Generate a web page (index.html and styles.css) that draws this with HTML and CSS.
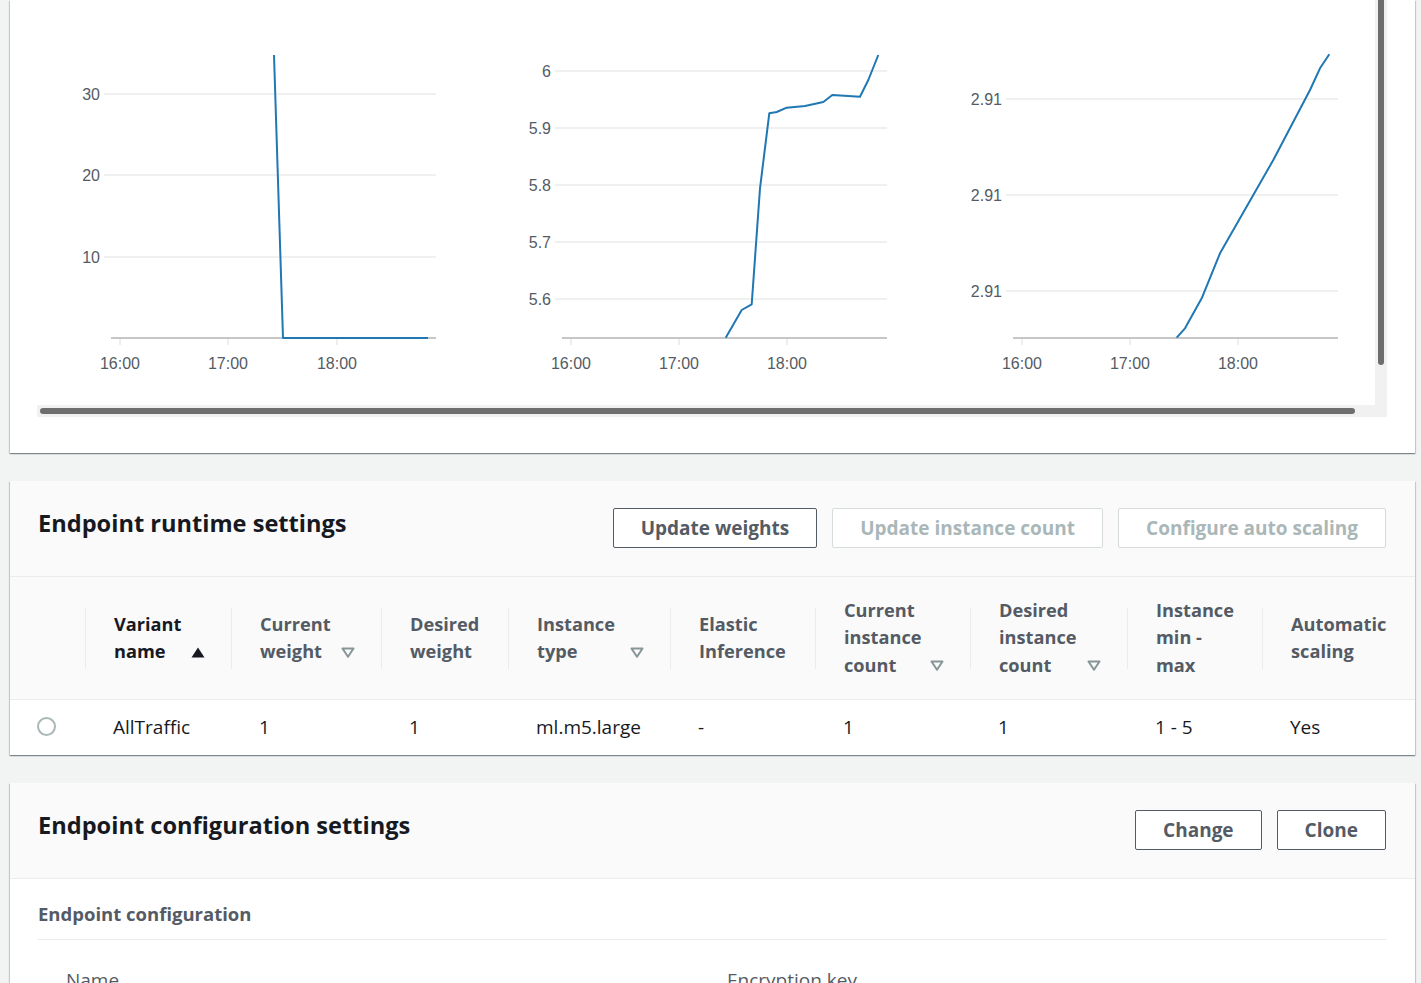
FILE: index.html
```html
<!DOCTYPE html>
<html lang="en">
<head>
<meta charset="utf-8">
<title>Endpoint</title>
<link rel="stylesheet" href="styles.css">
</head>
<body>
<div class="page">

  <section class="card card-charts">
    <div class="scroller">
      <div class="scroll-row">
        <div class="viewport">
          <div class="charts">
            <svg class="chart" width="451" height="405" viewBox="0 0 451 405">
              <g class="grid">
                <line x1="67" y1="94" x2="399" y2="94"/>
                <line x1="67" y1="175" x2="399" y2="175"/>
                <line x1="67" y1="257" x2="399" y2="257"/>
              </g>
              <line class="axis" x1="74" y1="338" x2="399" y2="338"/>
              <g class="ticks">
                <line x1="83" y1="339" x2="83" y2="345"/>
                <line x1="191" y1="339" x2="191" y2="345"/>
                <line x1="300" y1="339" x2="300" y2="345"/>
              </g>
              <g class="ylab">
                <text x="63" y="100">30</text>
                <text x="63" y="181">20</text>
                <text x="63" y="263">10</text>
              </g>
              <g class="xlab">
                <text x="83" y="369">16:00</text>
                <text x="191" y="369">17:00</text>
                <text x="300" y="369">18:00</text>
              </g>
              <polyline class="series" points="237,55 246,338 391,338"/>
            </svg>
            <svg class="chart" width="451" height="405" viewBox="0 0 451 405">
              <g class="grid">
                <line x1="67" y1="71" x2="399" y2="71"/>
                <line x1="67" y1="128" x2="399" y2="128"/>
                <line x1="67" y1="185" x2="399" y2="185"/>
                <line x1="67" y1="242" x2="399" y2="242"/>
                <line x1="67" y1="299" x2="399" y2="299"/>
              </g>
              <line class="axis" x1="74" y1="338" x2="399" y2="338"/>
              <g class="ticks">
                <line x1="83" y1="339" x2="83" y2="345"/>
                <line x1="191" y1="339" x2="191" y2="345"/>
                <line x1="299" y1="339" x2="299" y2="345"/>
              </g>
              <g class="ylab">
                <text x="63" y="77">6</text>
                <text x="63" y="134">5.9</text>
                <text x="63" y="191">5.8</text>
                <text x="63" y="248">5.7</text>
                <text x="63" y="305">5.6</text>
              </g>
              <g class="xlab">
                <text x="83" y="369">16:00</text>
                <text x="191" y="369">17:00</text>
                <text x="299" y="369">18:00</text>
              </g>
              <polyline class="series" points="237.7,337.7 253.7,310 263.7,304.3 272,188.3 281.3,113.3 288.7,112 298.7,107.7 317,106 335.3,102 344.3,95 372,96.7 380.3,80 390.3,55"/>
            </svg>
            <svg class="chart" width="451" height="405" viewBox="0 0 451 405">
              <g class="grid">
                <line x1="67" y1="99" x2="399" y2="99"/>
                <line x1="67" y1="195" x2="399" y2="195"/>
                <line x1="67" y1="291" x2="399" y2="291"/>
              </g>
              <line class="axis" x1="74" y1="338" x2="399" y2="338"/>
              <g class="ticks">
                <line x1="83" y1="339" x2="83" y2="345"/>
                <line x1="191" y1="339" x2="191" y2="345"/>
                <line x1="299" y1="339" x2="299" y2="345"/>
              </g>
              <g class="ylab">
                <text x="63" y="105">2.91</text>
                <text x="63" y="201">2.91</text>
                <text x="63" y="297">2.91</text>
              </g>
              <g class="xlab">
                <text x="83" y="369">16:00</text>
                <text x="191" y="369">17:00</text>
                <text x="299" y="369">18:00</text>
              </g>
              <polyline class="series" points="237.7,337.7 246,328.3 262.7,298.3 281,253.3 334.3,160 371,90 381,68.3 390.3,54.3"/>
            </svg>
          </div>
        </div>
        <div class="vtrack"><div class="vthumb"></div></div>
      </div>
      <div class="htrack"><div class="hthumb"></div></div>
    </div>
  </section>

  <section class="card">
    <header class="card-header">
      <h2 class="card-title">Endpoint runtime settings</h2>
      <div class="actions">
        <button class="btn">Update weights</button>
        <button class="btn btn-disabled">Update instance count</button>
        <button class="btn btn-disabled">Configure auto scaling</button>
      </div>
    </header>
    <table class="table">
      <colgroup>
        <col style="width:75px"><col style="width:146px"><col style="width:150px"><col style="width:127px"><col style="width:162px"><col style="width:145px"><col style="width:155px"><col style="width:157px"><col style="width:135px"><col style="width:153px">
      </colgroup>
      <thead>
        <tr>
          <th class="th-select"></th>
          <th><div class="th-inner"><div class="th-content"><span class="th-text sorted">Variant<br>name</span><svg class="sort" width="14" height="11" viewBox="0 0 14 11"><polygon points="7,0.5 13.5,10.5 0.5,10.5" fill="#16191f"/></svg></div></div></th>
          <th><div class="th-inner"><div class="th-content"><span class="th-text">Current<br>weight</span><svg class="sort" width="14" height="11" viewBox="0 0 14 11"><polygon points="1.5,1.5 12.5,1.5 7,9.8" fill="none" stroke="#879596" stroke-width="2" stroke-linejoin="round"/></svg></div></div></th>
          <th><div class="th-inner"><div class="th-content"><span class="th-text">Desired<br>weight</span></div></div></th>
          <th><div class="th-inner"><div class="th-content"><span class="th-text">Instance<br>type</span><svg class="sort" width="14" height="11" viewBox="0 0 14 11"><polygon points="1.5,1.5 12.5,1.5 7,9.8" fill="none" stroke="#879596" stroke-width="2" stroke-linejoin="round"/></svg></div></div></th>
          <th><div class="th-inner"><div class="th-content"><span class="th-text">Elastic<br>Inference</span></div></div></th>
          <th><div class="th-inner"><div class="th-content"><span class="th-text">Current<br>instance<br>count</span><svg class="sort" width="14" height="11" viewBox="0 0 14 11"><polygon points="1.5,1.5 12.5,1.5 7,9.8" fill="none" stroke="#879596" stroke-width="2" stroke-linejoin="round"/></svg></div></div></th>
          <th><div class="th-inner"><div class="th-content"><span class="th-text">Desired<br>instance<br>count</span><svg class="sort" width="14" height="11" viewBox="0 0 14 11"><polygon points="1.5,1.5 12.5,1.5 7,9.8" fill="none" stroke="#879596" stroke-width="2" stroke-linejoin="round"/></svg></div></div></th>
          <th><div class="th-inner"><div class="th-content"><span class="th-text">Instance<br>min -<br>max</span></div></div></th>
          <th><div class="th-inner"><div class="th-content"><span class="th-text">Automatic<br>scaling</span></div></div></th>
        </tr>
      </thead>
      <tbody>
        <tr>
          <td class="td-select"><span class="radio"></span></td>
          <td>AllTraffic</td>
          <td>1</td>
          <td>1</td>
          <td>ml.m5.large</td>
          <td>-</td>
          <td>1</td>
          <td>1</td>
          <td>1 - 5</td>
          <td>Yes</td>
        </tr>
      </tbody>
    </table>
  </section>

  <section class="card">
    <header class="card-header">
      <h2 class="card-title">Endpoint configuration settings</h2>
      <div class="actions">
        <button class="btn">Change</button>
        <button class="btn">Clone</button>
      </div>
    </header>
    <div class="card-body">
      <h3 class="sub-title">Endpoint configuration</h3>
      <div class="kv">
        <div class="kv-col"><div class="kv-label">Name</div></div>
        <div class="kv-col"><div class="kv-label">Encryption key</div></div>
      </div>
    </div>
  </section>

</div>
</body>
</html>
```

FILE: styles.css
```css
html, body {
  margin: 0;
  padding: 0;
  height: 983px;
  overflow: hidden;
}
body {
  background: #f2f3f3;
  font-family: "Open Sans", "Noto Sans", sans-serif;
  color: #16191f;
}
.page {
  padding-left: 10px;
  width: 1405px;
}
.card {
  background: #ffffff;
  box-shadow: 0 1px 1px 0 rgba(0, 28, 36, 0.3), 1px 1px 1px 0 rgba(0, 28, 36, 0.15), -1px 1px 1px 0 rgba(0, 28, 36, 0.15);
  margin-top: 28px;
}
.card-charts {
  margin-top: 0;
  padding: 0 28px 36px 27px;
}

/* chart scroller */
.scroller {
  width: 1350px;
  display: flex;
  flex-direction: column;
}
.scroll-row {
  display: flex;
  height: 405px;
}
.viewport {
  width: 1338px;
  height: 405px;
  overflow: hidden;
  background: #fff;
}
.charts {
  display: flex;
  width: 1361px;
}
.chart {
  flex: none;
  display: block;
}
.vtrack {
  width: 12px;
  background: #f1f1f1;
}
.vthumb {
  margin-left: 3px;
  width: 6px;
  height: 365px;
  border-radius: 0 0 3px 3px;
  background: #6e6e6e;
}
.htrack {
  height: 12px;
  background: #f1f1f1;
  display: flex;
  align-items: center;
}
.hthumb {
  margin-left: 3px;
  width: 1315px;
  height: 6px;
  border-radius: 3px;
  background: #6e6e6e;
}
.grid line {
  stroke: #eaeded;
  stroke-width: 1.5;
}
.axis {
  stroke: #c6c6c6;
  stroke-width: 2;
}
.ticks line {
  stroke: #dcdcdc;
  stroke-width: 1;
}
.ylab text, .xlab text {
  font-family: "Liberation Sans", Arial, sans-serif;
  font-size: 16px;
  fill: #545b64;
}
.ylab text { text-anchor: end; }
.xlab text { text-anchor: middle; }
.series {
  fill: none;
  stroke: #1f77b4;
  stroke-width: 2;
  stroke-linejoin: round;
}

/* card header */
.card-header {
  background: #fafafa;
  border-bottom: 1px solid #eaeded;
  display: flex;
  justify-content: space-between;
  align-items: flex-start;
  padding: 27px 29px 28px 28px;
}
.card-title {
  margin: 0;
  font-size: 23.6px;
  line-height: 30px;
  font-weight: 700;
  color: #16191f;
}
.actions {
  display: flex;
  gap: 15px;
}
.btn {
  height: 40px;
  box-sizing: border-box;
  padding: 0 27px;
  border: 1px solid #545b64;
  border-radius: 2px;
  background: #ffffff;
  color: #545b64;
  font-family: "Open Sans", "Noto Sans", sans-serif;
  font-size: 19px;
  font-weight: 700;
  line-height: 38px;
}
.btn-disabled {
  border-color: #d5dbdb;
  color: #aab7b8;
}

/* table */
.table {
  width: 1405px;
  table-layout: fixed;
  border-collapse: collapse;
}
.table th {
  background: #fafafa;
  height: 122px;
  padding: 0;
  text-align: left;
  vertical-align: middle;
  font-weight: 700;
  font-size: 18.2px;
  line-height: 27.5px;
  color: #545b64;
  border-bottom: 1px solid #eaeded;
}
.th-inner {
  height: 61px;
  border-left: 1px solid #eaeded;
  display: flex;
  align-items: center;
  padding: 0 26px 0 28px;
}
.th-content {
  flex: 1;
  display: flex;
  justify-content: space-between;
  align-items: flex-end;
}
.th-text.sorted {
  color: #16191f;
}
.sort {
  flex: none;
  margin-bottom: 8px;
}
.table td {
  height: 55px;
  padding: 0 0 0 28px;
  font-size: 19px;
  line-height: 27px;
  color: #16191f;
  vertical-align: middle;
}
.table td.td-select {
  padding-left: 27px;
}
.radio {
  display: block;
  box-sizing: border-box;
  width: 19px;
  height: 19px;
  border: 2px solid #aab7b8;
  border-radius: 50%;
  background: #fff;
  margin-top: -2px;
}

/* body */
.card-body {
  padding: 21px 29px 0 28px;
}
.sub-title {
  margin: 0;
  font-size: 18.5px;
  line-height: 27px;
  font-weight: 700;
  color: #545b64;
  padding-bottom: 12px;
  border-bottom: 1px solid #eaeded;
}
.kv {
  display: grid;
  grid-template-columns: 661px 1fr;
  padding-top: 27px;
}
.kv-col {
  padding-left: 28px;
}
.kv-label {
  font-size: 19px;
  line-height: 27px;
  color: #545b64;
}
```
